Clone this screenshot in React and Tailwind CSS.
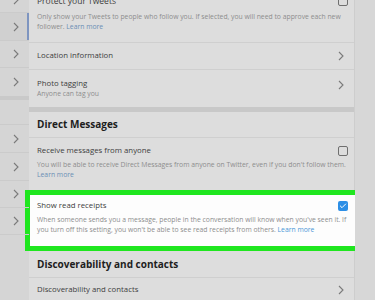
import { Check } from "lucide-react";

function Chevron({ className = "" }) {
  return (
    <svg width="6" height="10" viewBox="0 0 6 10" fill="none" className={className}>
      <path d="M1 1l4 4-4 4" stroke="#7a7a7a" strokeWidth="1.1" />
    </svg>
  );
}

function Box({ checked }) {
  if (checked) {
    return (
      <div className="w-[10px] h-[10px] rounded-[2px] bg-[#2d8fe6] flex items-center justify-center">
        <Check size={8} strokeWidth={3} color="#ffffff" />
      </div>
    );
  }
  return <div className="w-[10px] h-[10px] rounded-[2px] border border-[#6f6f6f]" />;
}

const sideRows = [
  { h: 26, chev: true, line: true },
  { h: 28, chev: true, line: true, active: true },
  { h: 27, chev: true, line: true },
  { h: 28, chev: true, line: false },
  { h: 4, dark: true },
  { h: 25, chev: false, line: true },
  { h: 28, chev: true, line: true },
  { h: 28, chev: true, line: true },
  { h: 27, chev: true, line: true },
  { h: 27, chev: true, line: true },
  { h: 80, chev: false, line: false },
];

export default function App() {
  return (
    <div className="w-[375px] h-[300px] overflow-hidden bg-[#d5d5d5] flex font-['Open_Sans',sans-serif]">
      {/* Left nav column */}
      <div className="w-[29px] shrink-0 flex flex-col -mt-[13px]">
        {sideRows.map((r, i) => (
          <div
            key={i}
            style={{ height: r.h }}
            className={[
              "relative shrink-0 flex items-center pl-[13px]",
              r.dark ? "bg-[#c9c9c9]" : r.active ? "bg-[#d0d0d0]" : "",
              r.line ? "border-b border-[#cbcbcb]" : "",
            ].join(" ")}
          >
            {r.chev && <Chevron />}
            {r.active && <div className="absolute right-0 top-0 bottom-0 w-[2px] bg-[#7e95c0]" />}
          </div>
        ))}
      </div>

      {/* Settings panel */}
      <div className="w-[326px] shrink-0 bg-[#dddddd] border-r border-[#cdcdcd] flex flex-col -mt-[6px]">
        {/* Protect your Tweets */}
        <div className="h-[49px] shrink-0 border-b border-[#cfcfcf] pl-[8px] pr-[6px] pt-[1px]">
          <div className="flex items-center justify-between">
            <span className="text-[8.5px] text-[#404040] leading-[12px]">Protect your Tweets</span>
            <Box />
          </div>
          <p className="mt-[5px] text-[6.8px] leading-[10px] text-[#8d8d8d] whitespace-nowrap">
            Only show your Tweets to people who follow you. If selected, you will need to approve each new
          </p>
          <p className="text-[6.8px] leading-[10px] text-[#8d8d8d]">
            follower. <span className="text-[#6b8fb5]">Learn more</span>
          </p>
        </div>

        {/* Location information */}
        <div className="h-[27px] shrink-0 border-b border-[#cfcfcf] pl-[8px] pr-[10px] flex items-center justify-between">
          <span className="text-[7.8px] text-[#404040]">Location information</span>
          <Chevron />
        </div>

        {/* Photo tagging */}
        <div className="h-[37px] shrink-0 pl-[8px] pr-[10px] pt-[8px] flex justify-between">
          <div>
            <p className="text-[7.8px] leading-[11px] text-[#404040]">Photo tagging</p>
            <p className="text-[6.8px] leading-[10px] text-[#8d8d8d]">Anyone can tag you</p>
          </div>
          <div className="pt-[2px]">
            <Chevron />
          </div>
        </div>

        <div className="h-[5px] shrink-0 bg-[#c8c8c8]" />

        {/* Direct Messages */}
        <div className="h-[26px] shrink-0 border-b border-[#cfcfcf] pl-[8px] flex items-center">
          <h2 className="text-[10px] font-bold text-[#1e1e1e]">Direct Messages</h2>
        </div>

        {/* Receive messages from anyone */}
        <div className="h-[52px] shrink-0 pl-[8px] pr-[6px] pt-[7px]">
          <div className="flex items-center justify-between">
            <span className="text-[7.8px] leading-[11px] text-[#404040]">Receive messages from anyone</span>
            <Box />
          </div>
          <p className="mt-[4px] text-[6.8px] leading-[10px] text-[#8d8d8d] whitespace-nowrap">
            You will be able to receive Direct Messages from anyone on Twitter, even if you don't follow them.
          </p>
          <p className="text-[6.8px] leading-[10px] text-[#6b8fb5]">Learn more</p>
        </div>

        {/* Show read receipts (highlighted) */}
        <div className="h-[61px] shrink-0 -ml-[4px] -mr-[6px] border-[5px] border-[#1fe61f] bg-[#fdfdfd] pl-[7px] pr-[7px] pt-[5px]">
          <div className="flex items-center justify-between">
            <span className="text-[7.8px] leading-[11px] text-[#404040]">Show read receipts</span>
            <Box checked />
          </div>
          <p className="mt-[4px] text-[6.8px] leading-[10px] text-[#8d8d8d] whitespace-nowrap">
            When someone sends you a message, people in the conversation will know when you've seen it. If
          </p>
          <p className="text-[6.8px] leading-[10px] text-[#8d8d8d] whitespace-nowrap">
            you turn off this setting, you won't be able to see read receipts from others.{" "}
            <span className="text-[#4a98d8]">Learn more</span>
          </p>
        </div>

        {/* Discoverability and contacts */}
        <div className="h-[27px] shrink-0 border-b border-[#cfcfcf] pl-[8px] flex items-center">
          <h2 className="text-[10px] font-bold text-[#1e1e1e]">Discoverability and contacts</h2>
        </div>
        <div className="h-[24px] shrink-0 pl-[8px] pr-[10px] flex items-center justify-between">
          <span className="text-[7.8px] text-[#404040]">Discoverability and contacts</span>
          <Chevron />
        </div>
      </div>

      {/* Right gutter */}
      <div className="flex-1 bg-[#d7d7d7]" />
    </div>
  );
}
